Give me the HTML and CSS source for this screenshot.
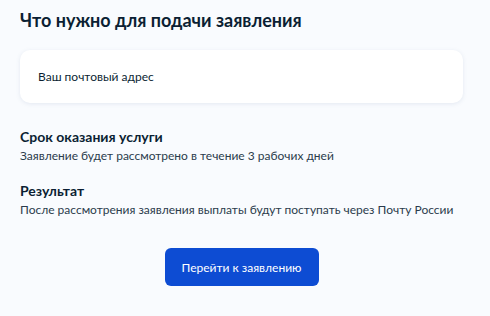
FILE: index.html
```html
<!DOCTYPE html>
<html lang="ru">
<head>
    <meta charset="UTF-8">
    <meta name="viewport" content="width=device-width, initial-scale=1.0">
    <title>Что нужно для подачи заявления</title>
    <link rel="stylesheet" href="styles.css">
</head>
<body>

<div class="section">
    <h2>Что нужно для подачи заявления</h2>

    <div class="card">
        <p>Ваш почтовый адрес</p>
    </div>

    <div class="info">
        <h3>Срок оказания услуги</h3>
        <p>Заявление будет рассмотрено в течение 3 рабочих дней</p>
    </div>

    <div class="info">
        <h3>Результат</h3>
        <p>После рассмотрения заявления выплаты будут поступать через Почту России</p>
    </div>

    <div class="actions">
        <button>Перейти к заявлению</button>
    </div>
</div>

</body>
</html>
```

FILE: styles.css
```css
body {
    margin: 0;
    background: #f9fbfe;
    font-family: Lato, "Noto Sans", sans-serif;
    color: #0b1f33;
}
.section {
    padding: 8px 20px 0 20px;
    width: 443px;
}
.section h2 {
    margin: 0;
    font-size: 18px;
    line-height: 24px;
    font-weight: 700;
    color: #0b1f33;
}
.card {
    margin-top: 18px;
    height: 53px;
    display: flex;
    align-items: center;
    padding: 0 18px;
    background: #fff;
    border-radius: 10px;
    box-shadow: 0 1px 4px rgba(105, 130, 165, 0.15);
}
.card p {
    margin: 0;
    font-size: 12px;
    line-height: 18px;
}
.info {
    margin-top: 24px;
}
.info + .info {
    margin-top: 16px;
}
.info h3 {
    margin: 0;
    font-size: 14px;
    line-height: 20px;
    font-weight: 700;
}
.info p {
    margin: 0;
    font-size: 12px;
    line-height: 18px;
    color: #2b3b4c;
}
.actions {
    margin-top: 29px;
    display: flex;
    justify-content: center;
}
.actions button {
    width: 154px;
    height: 38px;
    background: #0d4cd3;
    color: #fff;
    border: none;
    border-radius: 6px;
    font-family: Lato, "Noto Sans", sans-serif;
    font-size: 12px;
    cursor: pointer;
}
```
